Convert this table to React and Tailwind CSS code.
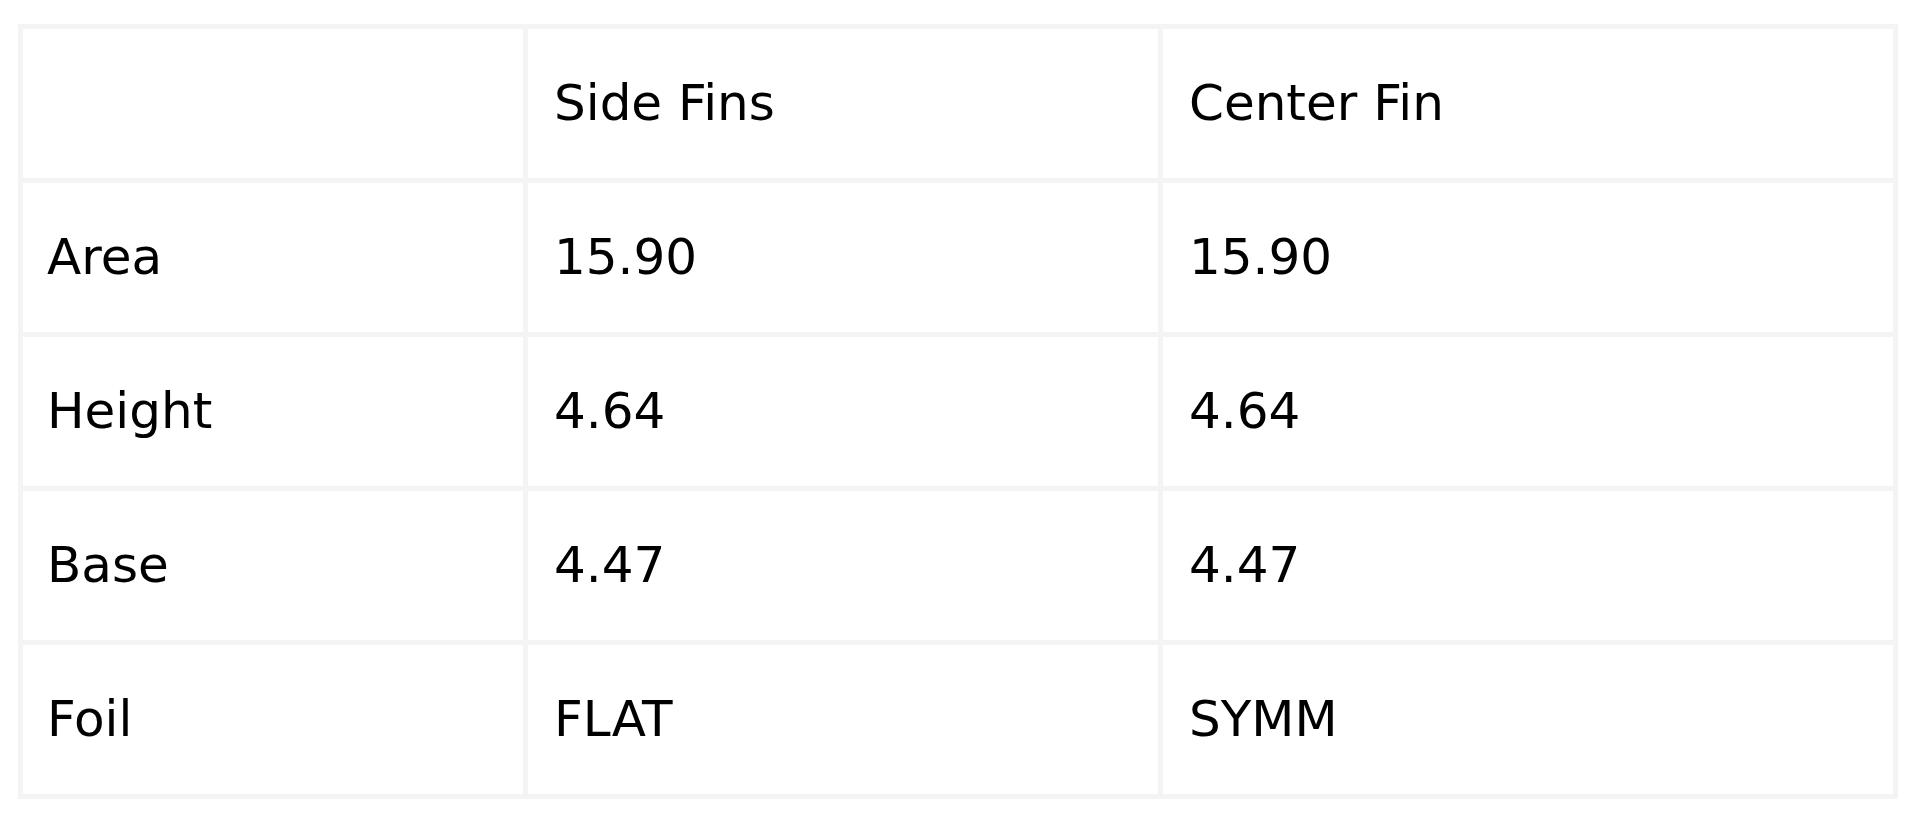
import React from "react";

const rows = [
  { label: "Area", side: "15.90", center: "15.90" },
  { label: "Height", side: "4.64", center: "4.64" },
  { label: "Base", side: "4.47", center: "4.47" },
  { label: "Foil", side: "FLAT", center: "SYMM" },
];

export default function App() {
  return (
    <div
      className="min-h-[818px] w-full bg-white pl-[18px] pt-[24px] text-black"
      style={{ fontFamily: '"DejaVu Sans", sans-serif' }}
    >
      <table className="w-[1880px] table-fixed border-collapse border-[5px] border-[#f4f4f4] text-[50px]">
        <colgroup>
          <col className="w-[505px]" />
          <col className="w-[635px]" />
          <col />
        </colgroup>
        <thead>
          <tr className="h-[154px]">
            <th className="border-[5px] border-[#f4f4f4] px-[24px] text-left font-normal"></th>
            <th className="border-[5px] border-[#f4f4f4] px-[26px] text-left font-normal">Side Fins</th>
            <th className="border-[5px] border-[#f4f4f4] px-[26px] text-left font-normal">Center Fin</th>
          </tr>
        </thead>
        <tbody>
          {rows.map((row) => (
            <tr key={row.label} className="h-[154px]">
              <td className="border-[5px] border-[#f4f4f4] px-[24px]">{row.label}</td>
              <td className="border-[5px] border-[#f4f4f4] px-[26px]">{row.side}</td>
              <td className="border-[5px] border-[#f4f4f4] px-[26px]">{row.center}</td>
            </tr>
          ))}
        </tbody>
      </table>
    </div>
  );
}
